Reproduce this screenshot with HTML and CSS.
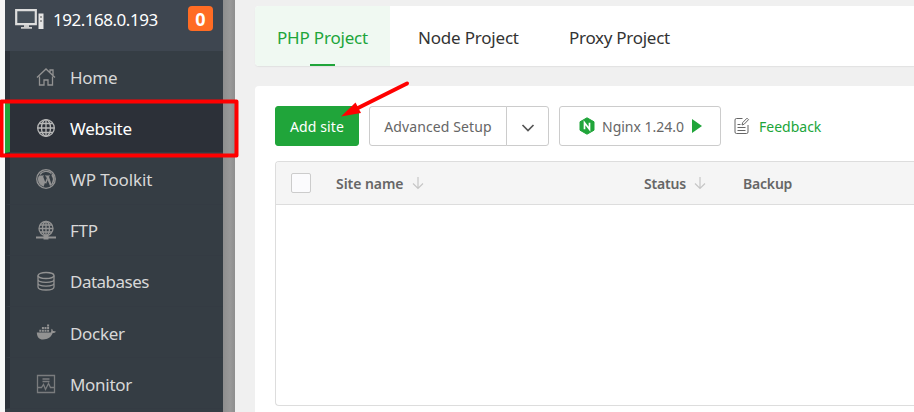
FILE: index.html
```html
<!DOCTYPE html>
<html lang="en">
<head>
<meta charset="utf-8">
<title>Website</title>
<link rel="stylesheet" href="styles.css">
</head>
<body>
<div class="app">
  <aside class="sidebar">
    <header class="server">
      <svg class="server-icon" width="29" height="21" viewBox="0 0 29 21"><path d="M1.200 1.200h19.600v14H1.200z" fill="#46505a" stroke="#ddd" stroke-width="2.200"/><path d="M9 16h5v2h3v1.800H6V18h3z" fill="#ccc"/><path d="M23.500 4.500h5V20h-5z" fill="#e4e4e4"/><path d="M25 7h2v2h-2zM25 11h2v2h-2z" fill="#999"/></svg>
      <span class="ip">192.168.0.193</span>
      <span class="count">0</span>
    </header>
    <nav class="menu">
      <a class="item"><svg viewBox="0 0 20 20"><path d="M1 10.500 10 2l9 8.500M14 5V3h3v5M3.500 9.500V18H8v-5h4v5h4.500V9.500"/></svg><span>Home</span></a>
      <a class="item active"><svg viewBox="0 0 20 20"><circle cx="10" cy="10" r="8.300"/><ellipse cx="10" cy="10" rx="4.500" ry="8.300"/><path d="M10 1.500v17M1.500 10h17M3 5.500h14M3 14.500h14"/></svg><span>Website</span></a>
      <a class="item"><svg viewBox="0 0 20 20"><circle cx="10" cy="10" r="9.300"/><path class="solid" d="M3 6.500h5v.8H7l3 8 1.500-4L10 7.300H9v-.8h5v.8h-1.200l2.700 8 1.300-4.500c.5-2-1.300-3-1.300-4.500 0-1 .6-1.500 1.400-1.600A8 8 0 0 1 14 17L10.800 9 7.500 17.700A8 8 0 0 1 2.300 8L6 17A8 8 0 0 1 3 6.500z"/><path d="M4 5.500a7.700 7.700 0 0 1 11.500-1"/></svg><span class="wide">WP Toolkit</span></a>
      <a class="item"><svg viewBox="0 0 20 20"><circle cx="10" cy="8.500" r="7"/><ellipse cx="10" cy="8.500" rx="3.500" ry="7"/><path d="M10 1.500v17M3 8.500h14M4 5h12M4 12h12"/><path d="M0 17.500h20" stroke-width="2"/><path class="solid" d="M7.500 16h5v3.500h-5z"/></svg><span>FTP</span></a>
      <a class="item"><svg viewBox="0 0 20 20"><ellipse cx="10" cy="4.500" rx="8" ry="3"/><path d="M2 4.500v11.500c0 4 16 4 16 0V4.500M2 8.500c0 3.700 16 3.700 16 0M2 12.300c0 3.700 16 3.700 16 0"/></svg><span class="tight">Databases</span></a>
      <a class="item"><svg viewBox="0 0 20 20"><path class="solid" d="M.8 9.500h14c.8-1 .2-2.700.8-3.700 1 .5 1.300 1.500 1.300 2.200 1-.2 2.300 0 3 .4-.5 1.200-1.700 1.700-3.200 1.700C15 14.500 12 16.500 7 16.500c-4 0-6-2.500-6.200-7zM3.300 6.700h2v2h-2zM5.900 6.700h2v2h-2zM8.500 6.700h2v2h-2zM11.100 6.700h2v2h-2zM5.900 4.100h2v2h-2zM8.500 4.100h2v2h-2zM11.100 4.100h2v2h-2zM11.100 1.500h2v2h-2z"/></svg><span>Docker</span></a>
      <a class="item"><svg viewBox="0 0 20 20"><g opacity=".75"><path d="M1.500 1.500h17v17h-17zM6.500 5h7M6.500 7.500h7M2 13.500h3.500l2-3 2 5 3-6 2 4h3.500"/></g></svg><span>Monitor</span></a>
    </nav>
  </aside>
  <div class="gutter"></div>
  <main class="main">
    <nav class="tabs">
      <a class="tab selected"><span>PHP Project</span></a>
      <a class="tab node"><span>Node Project</span></a>
      <a class="tab proxy"><span>Proxy Project</span></a>
    </nav>
    <section class="card">
      <div class="toolbar">
        <button class="add">Add site</button>
        <div class="split"><button class="advanced">Advanced Setup</button><button class="toggle"><svg width="14" height="8" viewBox="0 0 14 8"><path d="m1.500 1 5.500 5.500L12.500 1" fill="none" stroke="#555" stroke-width="1.700"/></svg></button></div>
        <button class="nginx"><svg width="16" height="18" viewBox="0 0 16 18"><path d="M8 .8 15 4.800v8.400l-7 4-7-4V4.800z" fill="#20a53a" stroke="#20a53a" stroke-linejoin="round"/><path d="M5.500 12.300V5.700l5 6.600V5.700" fill="none" stroke="#fff" stroke-width="1.700"/></svg><span>Nginx 1.24.0</span><i class="play"></i></button>
        <a class="feedback"><svg width="16" height="18" viewBox="0 0 16 18" fill="none" stroke="#666"><path d="M8.500 1.500H2.500a1.500 1.500 0 0 0-1.500 1.500v12a1.500 1.500 0 0 0 1.500 1.500h10a1.500 1.500 0 0 0 1.500-1.500V8M3.500 7.500h3M3.500 10.500h8M3.500 13.500h8"/><path d="m8 8 .7-2.400L13 1.200l1.500 1.500-4.300 4.500z"/></svg><span>Feedback</span></a>
      </div>
      <div class="table">
        <div class="row">
          <span class="check"></span>
          <span class="site">Site name</span>
          <svg class="sort" width="12" height="14" viewBox="0 0 12 14"><path d="M6 1v11M1 7.500 6 12.500l5-5"/></svg>
          <span class="status">Status</span>
          <svg class="sort" width="12" height="14" viewBox="0 0 12 14"><path d="M6 1v11M1 7.500 6 12.500l5-5"/></svg>
          <span class="backup">Backup</span>
        </div>
      </div>
    </section>
  </main>
</div>
<svg class="marks" width="914" height="412" viewBox="0 0 914 412"><path d="M1.500 101.500h235v54H1.500z" fill="none" stroke="#f00" stroke-width="4" stroke-linejoin="round"/><path d="M407 83.500 353 110.500" stroke="#f00" stroke-width="4" stroke-linecap="round"/><path d="m341 116.500 14.500-14 5.500 10.500z" fill="#f00"/></svg>
</body>
</html>
```
FILE: styles.css
```css
* { box-sizing: border-box; }
body { margin: 0; overflow: hidden; background: #f0f0f0; font-family: "Noto Sans", "Open Sans", sans-serif; }
.app { display: flex; width: 914px; height: 412px; padding-left: 5px; background: linear-gradient(90deg, #f6f6f6 0 5px, #f0f0f0 5px); overflow: hidden; }
.sidebar { width: 218px; flex: none; background: #353d44; }
.server { display: flex; align-items: center; height: 51px; padding: 0 10px 13px; background: #3e4650; color: #fff; }
.server-icon { flex: none; }
.ip { width: 116px; margin-left: 9px; font-size: 17px; letter-spacing: -.48px; white-space: nowrap; }
.count { margin-left: auto; margin-top: -1px; width: 25px; height: 25px; border-radius: 4px; background: #ff6c24; font-weight: 700; font-size: 18px; line-height: 26px; text-align: center; }
.menu { display: flex; flex-direction: column; }
.item { display: flex; align-items: center; flex: none; height: 51.200px; padding: 2px 0 0 26px; border-left: 5px solid #2b3038; border-bottom: 1px solid #343b43; color: #d8d8d8; font-size: 17px; letter-spacing: -.3px; white-space: nowrap; }
.item svg { width: 20px; height: 20px; margin: -1px 14px 0 0; fill: none; stroke: #929292; stroke-width: 1.300; flex: none; }
.item .solid { fill: #929292; stroke: none; }
.item.active { background: #2c3038; border-left-color: #20a53a; color: #fff; }
.item.active svg { stroke: #b8b8b8; }
.wide { letter-spacing: -.1px; }
.tight { letter-spacing: -.5px; }
.gutter { width: 12px; flex: none; background: linear-gradient(90deg, #8e8e8e, #999 60%, #8e8e8e); }
.main { flex: 1; padding: 6px 0 0 20px; min-width: 0; }
.tabs { display: flex; height: 60px; background: #fff; border-radius: 4px 0 0 4px; box-shadow: 0 1px 1px #e2e2e2; color: #333; font-size: 17px; white-space: nowrap; letter-spacing: -.2px; }
.tab { display: flex; align-items: center; padding-top: 3px; }
.selected { position: relative; justify-content: center; width: 135px; color: #20a53a; background: #f0f9f2; border-radius: 4px 0 0 4px; }
.selected::after { content: ""; position: absolute; left: 55px; bottom: 0; width: 25px; height: 2px; background: #20a53a; }
.node { width: 151px; padding-left: 28px; }
.proxy { padding-left: 28px; letter-spacing: -.28px; }
.card { height: 340px; margin-top: 20px; padding: 20px 0 0 20px; background: #fff; border-radius: 4px 0 0; }
.toolbar { display: flex; height: 40px; white-space: nowrap; }
button { height: 40px; padding: 0; border: 1px solid #ccc; border-radius: 3px; background: #fff; color: #666; font: 14px "Noto Sans", sans-serif; letter-spacing: .1px; }
.add { width: 84px; background: #20a53a; border-color: #20a53a; color: #fff; }
.split { display: flex; margin-left: 10px; }
.advanced { width: 138px; border-radius: 3px 0 0 3px; }
.toggle { width: 43px; margin-left: -1px; border-radius: 0 3px 3px 0; }
.nginx { display: flex; align-items: center; width: 162px; margin-left: 10px; padding-left: 19px; }
.nginx span { width: 83px; margin-left: 7px; text-align: left; letter-spacing: 0; }
.play { width: 0; height: 0; margin-left: 7px; border: solid transparent; border-width: 7px 0 7px 10px; border-left-color: #20a53a; }
.feedback { display: flex; align-items: center; margin-left: 13px; color: #20a53a; font-size: 14px; }
.feedback span { margin-left: 9px; letter-spacing: 0; }
.table { height: 245px; margin-top: 15px; border: 1px solid #ddd; border-right: 0; border-radius: 4px 0 0 4px; overflow: hidden; }
.row { display: flex; align-items: center; height: 43px; padding-left: 15px; background: #f5f5f5; border-bottom: 1px solid #ddd; color: #666; font-size: 14px; font-weight: 600; white-space: nowrap; }
.check { width: 20px; height: 20px; border: 1px solid #ccc; border-radius: 2px; background: #fbfbfd; }
.site { width: 68px; margin-left: 25px; margin-right: 8px; letter-spacing: -.05px; }
.sort { fill: none; stroke: #c6c6c6; stroke-width: 1.200; }
.status { width: 42px; margin-left: 220px; margin-right: 8px; letter-spacing: -.2px; }
.backup { margin-left: 37px; letter-spacing: -.2px; }
.marks { position: absolute; left: 0; top: 0; pointer-events: none; }
```
